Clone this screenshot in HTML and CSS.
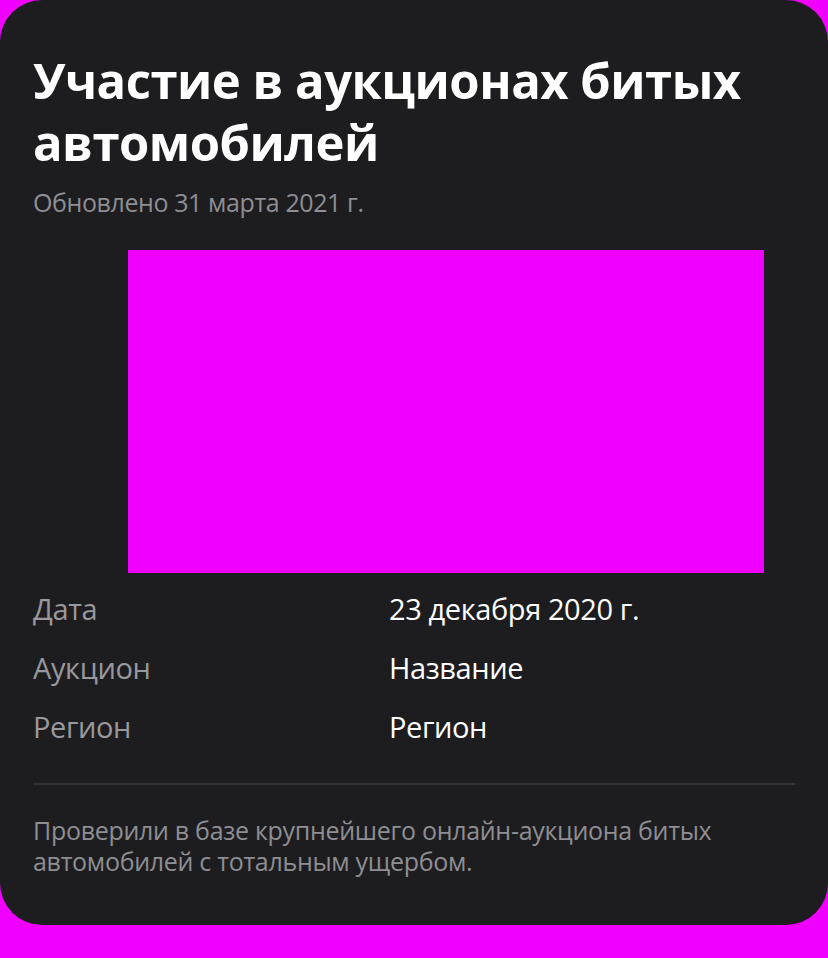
FILE: index.html
```html
<!DOCTYPE html>
<html lang="ru">
<head>
<meta charset="utf-8">
<link rel="stylesheet" href="styles.css">
</head>
<body>
<div class="card">
  <h1 class="title">Участие в аукционах битых автомобилей</h1>
  <div class="updated">Обновлено 31 марта 2021 г.</div>
  <div class="picture"></div>
  <dl class="details">
    <div class="row"><dt>Дата</dt><dd>23 декабря 2020 г.</dd></div>
    <div class="row"><dt>Аукцион</dt><dd>Название</dd></div>
    <div class="row"><dt>Регион</dt><dd>Регион</dd></div>
  </dl>
  <div class="divider"></div>
  <p class="note">Проверили в базе крупнейшего онлайн-аукциона битых автомобилей с тотальным ущербом.</p>
</div>
</body>
</html>
```
FILE: styles.css
```css
html, body {
  margin: 0;
  padding: 0;
  background: #ef00ff;
}
body {
  width: 828px;
  height: 958px;
  font-family: "Open Sans", "Noto Sans", sans-serif;
}
.card {
  box-sizing: border-box;
  width: 828px;
  height: 925px;
  background: #1d1d1f;
  border-radius: 42px;
  padding: 49px 33px 0 33px;
}
.title {
  margin: 0;
  color: #ffffff;
  font-size: 49px;
  font-weight: 700;
  line-height: 62px;
  letter-spacing: -0.5px;
  width: 760px;
}
.updated {
  margin-top: 14px;
  color: #8e8e93;
  font-size: 25px;
  line-height: 30px;
  letter-spacing: -0.4px;
}
.picture {
  margin: 33px 0 0 95px;
  width: 636px;
  height: 323px;
  background: #ef00ff;
}
.details {
  margin: 15px 0 0 0;
  display: flex;
  flex-direction: column;
  gap: 19px;
}
.row {
  display: grid;
  grid-template-columns: 356px 1fr;
  height: 40px;
  align-items: center;
}
.row dt {
  color: #98989d;
  font-size: 29px;
  letter-spacing: -0.4px;
}
.row dd {
  margin: 0;
  color: #ffffff;
  font-size: 29px;
  letter-spacing: -0.4px;
}
.divider {
  margin-top: 37px;
  height: 2px;
  background: #333335;
}
.note {
  margin: 30px 0 0 0;
  color: #8e8e93;
  font-size: 25px;
  line-height: 31px;
  letter-spacing: -0.3px;
  width: 720px;
}
```
